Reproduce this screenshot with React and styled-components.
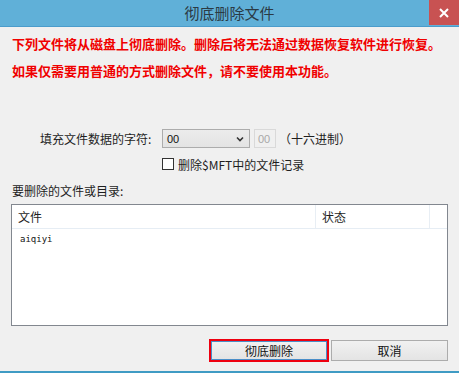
import React from "react";
import styled, { createGlobalStyle } from "styled-components";

const Global = createGlobalStyle`
  html, body { margin: 0; padding: 0; background: #f0f0f0; }
  body { font-family: "Noto Sans CJK SC", "Noto Sans", sans-serif; }
  * { box-sizing: border-box; }
`;

const Window = styled.div`
  width: 459px;
  height: 373px;
  background: #f0f0f0;
  border-bottom: 2px solid #3f9bc4;
  display: flex;
  flex-direction: column;
  overflow: hidden;
`;

const TitleBar = styled.div`
  height: 27px;
  flex: none;
  background: #60b0d8;
  border-bottom: 1px solid #4b9ccb;
  display: grid;
  grid-template-columns: 30px 1fr 30px;
  align-items: start;
`;

const Title = styled.div`
  grid-column: 2;
  text-align: center;
  font-size: 15px;
  line-height: 26px;
  color: #2b3a44;
`;

const Close = styled.div`
  grid-column: 3;
  height: 25px;
  background: #c85252;
  display: flex;
  align-items: center;
  justify-content: center;
`;

const Body = styled.div`
  flex: 1;
  display: flex;
  flex-direction: column;
  padding: 9px 11px 0 11px;
`;

const Warnings = styled.div`
  display: flex;
  flex-direction: column;
  gap: 11px;
  padding-left: 1px;
`;

const Warn = styled.div`
  color: #f00000;
  font-weight: 700;
  font-size: 13px;
  line-height: 16px;
  white-space: nowrap;
`;

const FormRow = styled.div`
  display: flex;
  align-items: center;
  margin-top: 50px;
  padding-left: 29px;
  height: 19px;
`;

const Label = styled.div`
  width: 116px;
  font-size: 12px;
  color: #1e1e1e;
  white-space: nowrap;
  margin-right: 6px;
`;

const Select = styled.div`
  width: 88px;
  height: 19px;
  border: 1px solid #acacac;
  background: linear-gradient(#ececec, #e3e3e3);
  display: flex;
  align-items: center;
  justify-content: space-between;
  padding: 0 5px 0 4px;
  font-family: "Liberation Sans", sans-serif;
  font-size: 11px;
  color: #111;
`;

const SmallInput = styled.div`
  width: 22px;
  height: 19px;
  margin-left: 4px;
  border: 1px solid #d9d9d9;
  background: #f0f0f0;
  color: #a8a8a8;
  font-family: "Liberation Sans", sans-serif;
  font-size: 11px;
  display: flex;
  align-items: center;
  padding-left: 3px;
`;

const Hint = styled.div`
  margin-left: 3px;
  font-size: 12px;
  color: #1e1e1e;
  white-space: nowrap;
`;

const CheckRow = styled.label`
  display: flex;
  align-items: center;
  margin-top: 10px;
  padding-left: 151px;
  height: 12px;
  font-size: 12px;
  color: #1e1e1e;
  white-space: nowrap;
`;

const Box = styled.span`
  width: 12px;
  height: 12px;
  border: 1px solid #333;
  background: #fff;
  margin-right: 4px;
  flex: none;
`;

const SectionLabel = styled.div`
  margin-top: 14px;
  padding-left: 1px;
  font-size: 12px;
  line-height: 14px;
  color: #1e1e1e;
`;

const List = styled.div`
  margin-top: 6px;
  height: 122px;
  border: 1px solid #82878f;
  background: #fff;
  display: flex;
  flex-direction: column;
`;

const Header = styled.div`
  height: 24px;
  display: grid;
  grid-template-columns: 304px 114px 1fr;
  border-bottom: 1px solid #e6edf4;
`;

const HeadCell = styled.div`
  font-size: 12px;
  color: #1e1e1e;
  display: flex;
  align-items: center;
  padding-left: 6px;
  border-right: ${(p) => (p.$last ? "none" : "1px solid #e8eef4")};
`;

const Row = styled.div`
  height: 20px;
  display: flex;
  align-items: center;
  padding-left: 8px;
  font-family: "DejaVu Sans Mono", monospace;
  font-size: 9px;
  color: #111;
`;

const Buttons = styled.div`
  margin-top: 13px;
  display: flex;
  justify-content: flex-end;
  gap: 2px;
`;

const Focus = styled.div`
  border: 2px solid #ee0010;
  width: 120px;
  height: 23px;
  display: flex;
`;

const Button = styled.div`
  flex: ${(p) => (p.$inner ? 1 : "none")};
  width: ${(p) => (p.$inner ? "auto" : "117px")};
  height: ${(p) => (p.$inner ? "auto" : "21px")};
  margin-top: ${(p) => (p.$inner ? "0" : "1px")};
  border: 1px solid ${(p) => (p.$inner ? "#4a8ec8" : "#acacac")};
  background: linear-gradient(#f1f1f1, #e4e4e4);
  display: flex;
  align-items: center;
  justify-content: center;
  font-size: 12px;
  color: #111;
`;

export default function App() {
  return (
    <>
      <Global />
      <Window>
        <TitleBar>
          <Title>彻底删除文件</Title>
          <Close>
            <svg width="10" height="10" viewBox="0 0 10 10">
              <path d="M1 1 L9 9 M9 1 L1 9" stroke="#fff" strokeWidth="2" />
            </svg>
          </Close>
        </TitleBar>
        <Body>
          <Warnings>
            <Warn>下列文件将从磁盘上彻底删除。删除后将无法通过数据恢复软件进行恢复。</Warn>
            <Warn>如果仅需要用普通的方式删除文件，请不要使用本功能。</Warn>
          </Warnings>
          <FormRow>
            <Label>填充文件数据的字符:</Label>
            <Select>
              <span>00</span>
              <svg width="8" height="6" viewBox="0 0 8 6">
                <path d="M1 1.5 L4 4.5 L7 1.5" stroke="#333" strokeWidth="1.6" fill="none" />
              </svg>
            </Select>
            <SmallInput>00</SmallInput>
            <Hint>（十六进制）</Hint>
          </FormRow>
          <CheckRow>
            <Box />
            删除$MFT中的文件记录
          </CheckRow>
          <SectionLabel>要删除的文件或目录:</SectionLabel>
          <List>
            <Header>
              <HeadCell>文件</HeadCell>
              <HeadCell>状态</HeadCell>
              <HeadCell $last />
            </Header>
            <Row>aiqiyi</Row>
          </List>
          <Buttons>
            <Focus>
              <Button $inner>彻底删除</Button>
            </Focus>
            <Button>取消</Button>
          </Buttons>
        </Body>
      </Window>
    </>
  );
}
